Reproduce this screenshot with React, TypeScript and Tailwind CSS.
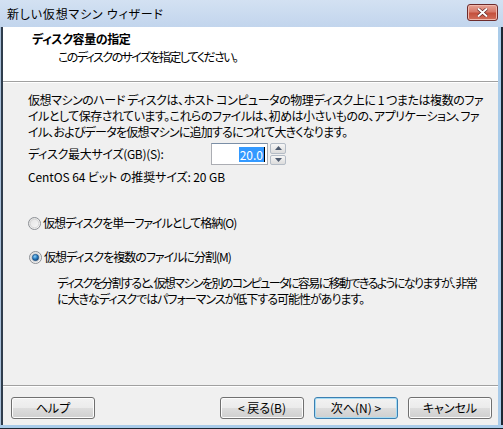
import React from "react";

const FONT = "font-['Meiryo_UI','Noto_Sans_CJK_JP',sans-serif] [font-feature-settings:'palt']";

function Radio({ checked }: { checked?: boolean }) {
  return (
    <svg width="13" height="13" viewBox="0 0 13 13" className="shrink-0">
      <defs>
        <linearGradient id={checked ? "rgOn" : "rgOff"} x1="0" y1="0" x2="1" y2="1">
          <stop offset="0" stopColor="#e0e0e0" />
          <stop offset="1" stopColor="#fbfbfb" />
        </linearGradient>
        <radialGradient id="dot" cx="0.4" cy="0.35" r="0.7">
          <stop offset="0" stopColor="#8fd0f5" />
          <stop offset="0.5" stopColor="#2a7fc4" />
          <stop offset="1" stopColor="#0f3d6e" />
        </radialGradient>
      </defs>
      <circle cx="6.5" cy="6.5" r="6" fill={`url(#${checked ? "rgOn" : "rgOff"})`} stroke="#8c8f94" />
      <circle cx="6.5" cy="6.5" r="4.3" fill="none" stroke="#d6d6d6" strokeWidth="1" />
      {checked && <circle cx="6.5" cy="6.5" r="3.2" fill="url(#dot)" stroke="#1c4a78" strokeWidth="0.6" />}
    </svg>
  );
}

function WinButton({ label, primary }: { label: string; primary?: boolean }) {
  return (
    <div
      className={`flex h-[22px] w-[84px] shrink-0 items-center justify-center rounded-[3px] border text-[12px] text-black ${
        primary
          ? "border-[#3c7fb1] shadow-[inset_0_0_0_1px_#a6dcf4]"
          : "border-[#707070] shadow-[inset_0_0_0_1px_#fcfcfc]"
      } bg-[linear-gradient(#f2f2f2_0%,#ebebeb_50%,#dddddd_50%,#cfcfcf_100%)]`}
    >
      {label}
    </div>
  );
}

export default function App() {
  return (
    <div className={`flex h-[429px] w-[503px] flex-col overflow-hidden bg-[#c6d8ee] ${FONT}`}>
      {/* title bar */}
      <div className="flex h-[27px] shrink-0 items-center justify-between bg-[linear-gradient(#d3e1f2,#c2d5ed)] pl-[7px] pr-[5px]">
        <span className="text-[12px] leading-none tracking-[0.8px] text-black">新しい仮想マシン ウィザード</span>
        <div className="mb-[3px] flex h-[17px] w-[31px] items-center justify-center rounded-[3px] border border-[#6d2b2b] bg-[linear-gradient(#e6a497_0%,#d77a6a_45%,#c4503c_55%,#d2705c_100%)] shadow-[inset_0_0_0_1px_#f0b9ad]">
          <svg width="11" height="9" viewBox="0 0 11 9">
            <path d="M1 0.5 L5.5 4.5 L10 0.5 M1 8.5 L5.5 4.5 L10 8.5" stroke="#5a2222" strokeWidth="3.2" fill="none" />
            <path d="M1 0.5 L5.5 4.5 L10 0.5 M1 8.5 L5.5 4.5 L10 8.5" stroke="#ffffff" strokeWidth="2" fill="none" />
          </svg>
        </div>
      </div>

      {/* frame + client */}
      <div className="flex min-h-0 flex-1">
        <div className="w-[1px] shrink-0 bg-[#a8bfd9]" />
        <div className="w-[2px] shrink-0 bg-[#2f3d4d]" />
        <div className="flex min-w-0 flex-1 flex-col overflow-hidden bg-[#f0f0f0]">
          {/* header */}
          <div className="h-[55px] shrink-0 border-b border-[#a0a0a0] bg-white pt-[4px]">
            <div className="pl-[29px] text-[12px] font-bold leading-[16px] tracking-[-0.4px] text-black">ディスク容量の指定</div>
            <div className="mt-[2px] pl-[55px] text-[12px] leading-[16px] tracking-[-1.6px] text-black">
              このディスクのサイズを指定してください。
            </div>
          </div>
          <div className="h-px shrink-0 bg-white" />

          {/* body */}
          <div className="flex flex-1 flex-col pl-[25px] pt-[9px] text-[12px] leading-[16px] text-black">
            <div className="whitespace-nowrap tracking-[-0.45px]">仮想マシンのハード ディスクは、ホスト コンピュータの物理ディスク上に 1 つまたは複数のファ</div>
            <div className="whitespace-nowrap tracking-[-0.5px]">イルとして保存されています。これらのファイルは、初めは小さいものの、アプリケーション、ファ</div>
            <div className="whitespace-nowrap tracking-[-0.78px]">イル、およびデータを仮想マシンに追加するにつれて大きくなります。</div>

            <div className="mt-[3px] flex items-center">
              <span className="w-[183px] tracking-[-0.3px]">ディスク最大サイズ(GB)(S):</span>
              <div className="flex h-[22px] w-[57px] items-center justify-end border border-[#abadb3] border-t-[#7a8ea6] bg-white pr-[2px]">
                <span className="bg-[#3399ff] px-[1px] leading-[15px] text-white">20.0</span>
                <span className="h-[15px] w-px bg-black" />
              </div>
              <div className="ml-[2px] flex h-[22px] w-[16px] flex-col gap-[1px]">
                <div className="flex flex-1 items-center justify-center rounded-[2px] border border-[#b4bcc6] bg-[linear-gradient(#f6f6f6,#dcdcdc)]">
                  <svg width="7" height="4" viewBox="0 0 7 4"><path d="M0 4 L3.5 0 L7 4Z" fill="#4d5a6e" /></svg>
                </div>
                <div className="flex flex-1 items-center justify-center rounded-[2px] border border-[#b4bcc6] bg-[linear-gradient(#f6f6f6,#dcdcdc)]">
                  <svg width="7" height="4" viewBox="0 0 7 4"><path d="M0 0 L3.5 4 L7 0Z" fill="#4d5a6e" /></svg>
                </div>
              </div>
            </div>

            <div className="mt-[4px] tracking-[-0.1px]">CentOS 64 ビット の推奨サイズ: 20 GB</div>

            <div className="mt-[30px] flex items-center gap-[2px]">
              <Radio />
              <span className="tracking-[-1px]">仮想ディスクを単一ファイルとして格納(O)</span>
            </div>

            <div className="mt-[18px] flex items-center gap-[2px] pl-[1px]">
              <Radio checked />
              <span className="tracking-[-1px]">仮想ディスクを複数のファイルに分割(M)</span>
            </div>

            <div className="mt-[10px] pl-[29px]">
              <div className="whitespace-nowrap tracking-[-1.6px]">ディスクを分割すると、仮想マシンを別のコンピュータに容易に移動できるようになりますが、非常</div>
              <div className="whitespace-nowrap tracking-[-1px]">に大きなディスクではパフォーマンスが低下する可能性があります。</div>
            </div>
          </div>

          {/* footer */}
          <div className="h-px shrink-0 bg-[#a0a0a0]" />
          <div className="h-px shrink-0 bg-white" />
          <div className="flex h-[38px] shrink-0 items-start pl-[8px] pr-[6px] pt-[10px]">
            <WinButton label="ヘルプ" />
            <div className="flex-1" />
            <div className="flex gap-[10px]">
              <WinButton label="< 戻る(B)" />
              <WinButton label="次へ(N) >" primary />
              <WinButton label="キャンセル" />
            </div>
          </div>
        </div>
        <div className="w-[3px] shrink-0 bg-[#a9cbe9]" />
        <div className="w-[2px] shrink-0 bg-[#1d2733]" />
      </div>
      <div className="h-[3px] shrink-0 bg-[#a9cbe9]" />
      <div className="h-px shrink-0 bg-[#1d2733]" />
    </div>
  );
}
